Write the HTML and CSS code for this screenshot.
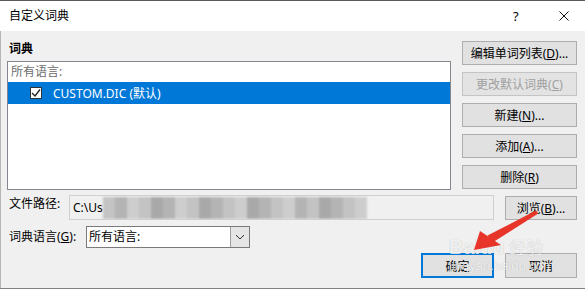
FILE: index.html
```html
<!DOCTYPE html>
<html lang="zh-CN">
  <head>
    <meta charset="UTF-8" />
    <title>自定义词典</title>
    <link rel="stylesheet" href="styles.css">
  </head>
  <body>
    <div class="dialog">
      <div class="titlebar">
        <span class="title">自定义词典</span>
        <span class="help">?</span>
        <svg class="close" width="10" height="10" viewBox="0 0 10 10">
          <path d="M0.5 0.5 L9.5 9.5 M9.5 0.5 L0.5 9.5" stroke="#111" stroke-width="1" />
        </svg>
      </div>
      <div class="content">
        <div class="top">
          <div class="dict">
            <div class="group-label">词典</div>
            <div class="listbox">
              <div class="list-head">所有语言:</div>
              <div class="list-item selected">
                <span class="check">
                  <svg width="10" height="10" viewBox="0 0 10 10">
                    <path d="M1 5 L4 8 L9 1.5" fill="none" stroke="#222" stroke-width="1.3" />
                  </svg>
                </span>
                CUSTOM.DIC (默认)
              </div>
            </div>
          </div>
          <div class="side-buttons">
            <button class="btn">编辑单词列表(<u>D</u>)...</button>
            <button class="btn" disabled>更改默认词典(<u>C</u>)</button>
            <button class="btn">新建(<u>N</u>)...</button>
            <button class="btn">添加(<u>A</u>)...</button>
            <button class="btn">删除(<u>R</u>)</button>
          </div>
        </div>
        <div class="path-row">
          <span class="field-label path-label">文件路径:</span>
          <div class="path-box">
            C:\Us<span class="blur">
              <i class="b1"></i><i class="b2"></i><i class="b3"></i><i class="b1"></i><i class="b4"></i><i class="b2"></i><i class="b3"></i><i class="b1"></i><i class="b4"></i><i class="b2"></i><i class="b1"></i><i class="b3"></i><i class="b4"></i><i class="b2"></i><i class="b1"></i><i class="b3"></i><i class="b2"></i><i class="b1"></i><i class="b4"></i><i class="b2"></i><i class="b1"></i><i class="b3"></i>
            </span>
          </div>
          <button class="btn browse">浏览(<u>B</u>)...</button>
        </div>
        <div class="lang-row">
          <span class="field-label lang-label">词典语言(<u>G</u>):</span>
          <div class="select">
            <span class="select-value">所有语言:</span>
            <span class="select-arrow">
              <svg width="10" height="6" viewBox="0 0 10 6">
                <path d="M1 1 L5 5 L9 1" fill="none" stroke="#333" stroke-width="1" />
              </svg>
            </span>
          </div>
        </div>
        <div class="footer">
          <button class="btn ok">确定</button>
          <button class="btn cancel">取消</button>
        </div>
      </div>

      <div class="watermark">
        <span class="wm-logo">Baidu<span class="wm-cn">经验</span></span>
        <span class="wm-url">jingyan.baidu.com</span>
      </div>

      <svg class="pointer" width="585" height="291" viewBox="0 0 585 291">
        <polygon points="536,210.5 538.2,213.5 492.5,242.5 487.5,235.5" fill="#e8352a" />
        <polygon points="480,231 501,245 474,250" fill="#e8352a" />
      </svg>
    </div>
  </body>
</html>
```

FILE: styles.css
```css
body {
  margin: 0;
  background: #ffffff;
  font-family: "Noto Sans", "Noto Sans CJK SC", sans-serif;
  font-size: 12px;
  color: #000;
}
.dialog {
  position: relative;
  width: 585px;
  height: 289px;
  display: flex;
  flex-direction: column;
  border-bottom: 1px solid #808080;
  box-sizing: border-box;
}
.titlebar {
  height: 31px;
  box-sizing: border-box;
  border-top: 1px solid #5a5a5a;
  background: #ffffff;
  display: flex;
  align-items: center;
  padding-left: 9px;
}
.title {
  font-size: 12px;
  line-height: 16px;
}
.help {
  margin-left: auto;
  font-size: 13px;
  line-height: 16px;
  width: 10px;
}
.close {
  margin-left: 36px;
  margin-right: 16px;
}
.content {
  flex: 1;
  background: #f0f0f0;
  border-left: 1px solid #b5b5b5;
  padding: 10px 8px 0 6px;
}
.top {
  display: flex;
  gap: 11px;
}
.dict {
  width: 444px;
}
.group-label {
  height: 20px;
  line-height: 15px;
  padding-left: 2px;
  font-weight: bold;
}
.listbox {
  height: 129px;
  box-sizing: border-box;
  border: 1px solid #828790;
  background: #ffffff;
}
.list-head {
  height: 20px;
  line-height: 20px;
  padding-left: 3px;
  color: #6d6d6d;
}
.list-item {
  height: 22px;
  display: flex;
  align-items: center;
}
.list-item.selected {
  background: #0078d7;
  color: #ffffff;
}
.check {
  width: 10px;
  height: 10px;
  margin-left: 22px;
  margin-right: 11px;
  border: 1px solid #333;
  background: #ffffff;
  display: flex;
}
.side-buttons {
  width: 115px;
  display: flex;
  flex-direction: column;
  gap: 7px;
}
.btn {
  height: 24px;
  padding: 0;
  font-family: inherit;
  font-size: 12px;
  color: #000;
  background: #e1e1e1;
  border: 1px solid #adadad;
}
.btn:disabled {
  color: #a0a0a0;
  border-color: #c4c4c4;
  background: #e3e3e3;
}
.path-row {
  display: flex;
  align-items: flex-start;
  margin-top: 5px;
}
.field-label {
  padding-left: 2px;
  line-height: 16px;
}
.path-label {
  width: 60px;
  margin-top: 1px;
}
.path-box {
  width: 425px;
  height: 25px;
  box-sizing: border-box;
  border: 1px solid #cfcfcf;
  background: #f0f0f0;
  display: flex;
  align-items: center;
  padding-left: 3px;
  overflow: hidden;
  white-space: nowrap;
}
.blur {
  display: flex;
  height: 22px;
  filter: blur(1.2px);
}
.blur i {
  width: 12px;
  height: 22px;
}
.b1 { background: #c3c3c3; }
.b2 { background: #b4b4b4; }
.b3 { background: #cdcdcd; }
.b4 { background: #a9a9a9; }
.browse {
  width: 72px;
  margin-left: 11px;
  margin-top: 1px;
}
.lang-row {
  display: flex;
  align-items: center;
  margin-top: 6px;
}
.lang-label {
  width: 77px;
}
.select {
  width: 164px;
  height: 22px;
  box-sizing: border-box;
  border: 1px solid #7a7a7a;
  background: #ffffff;
  display: flex;
}
.select-value {
  flex: 1;
  line-height: 20px;
  padding-left: 2px;
}
.select-arrow {
  width: 18px;
  background: #e5e5e5;
  border-left: 1px solid #a0a0a0;
  display: flex;
  align-items: center;
  justify-content: center;
}
.footer {
  display: flex;
  justify-content: flex-end;
  gap: 11px;
  margin-top: 5px;
}
.ok {
  width: 73px;
  height: 25px;
  border: 2px solid #0078d7;
}
.cancel {
  width: 72px;
  height: 25px;
}
.watermark {
  position: absolute;
  left: 449px;
  top: 236px;
  width: 110px;
  display: flex;
  flex-direction: column;
  color: rgba(255, 255, 255, 0.8);
  text-shadow: 0 0 1px rgba(0, 0, 0, 0.25);
  pointer-events: none;
}
.wm-logo {
  font-family: "Liberation Sans", sans-serif;
  font-weight: bold;
  font-size: 20px;
  line-height: 22px;
}
.wm-cn {
  font-family: "Noto Sans CJK SC", sans-serif;
  font-weight: normal;
  font-size: 17px;
  margin-left: 5px;
}
.wm-url {
  font-family: "Liberation Sans", sans-serif;
  font-size: 13px;
  line-height: 15px;
}
.pointer {
  position: absolute;
  left: 0;
  top: 0;
  pointer-events: none;
}
```
